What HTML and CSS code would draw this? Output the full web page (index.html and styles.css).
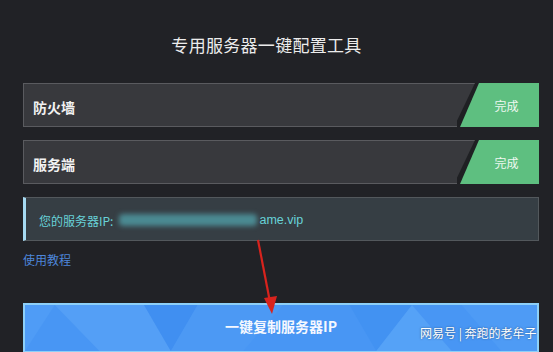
FILE: index.html
```html
<!DOCTYPE html>
<html lang="zh">
<head>
<meta charset="utf-8">
<link rel="stylesheet" href="styles.css">
</head>
<body>
<div class="page">
  <h1 class="title">专用服务器一键配置工具</h1>
  <div class="list">
    <div class="row">
      <span class="label">防火墙</span>
      <span class="status"><span class="status-fill">完成</span></span>
    </div>
    <div class="row">
      <span class="label">服务端</span>
      <span class="status"><span class="status-fill">完成</span></span>
    </div>
    <div class="ip">
      <span class="ip-text">您的服务器IP:</span><span class="blur"></span><span class="ip-text latin">ame.vip</span>
    </div>
  </div>
  <a class="link" href="#">使用教程</a>
  <div class="btn">
    <svg class="btn-bg" viewBox="0 0 516 50" preserveAspectRatio="none">
      <polygon points="0,0 30,0 0,50" fill="#4f9cf6"/>
      <polygon points="30,0 120,0 147,50 75,50" fill="#549ff6"/>
      <polygon points="120,0 174,0 147,50" fill="#408ff1"/>
      <polygon points="174,0 260,0 220,50 147,50" fill="#4c99f4"/>
      <polygon points="327,0 390,0 354,50" fill="#4292f2"/>
      <polygon points="354,50 390,0 430,50" fill="#55a2f7"/>
      <polygon points="440,0 516,0 516,50 480,50" fill="#4e9bf5"/>
    </svg>
    <span class="btn-text">一键复制服务器IP</span>
  </div>
</div>
<svg class="arrow" width="553" height="352" viewBox="0 0 553 352">
  <line x1="258" y1="240" x2="270" y2="302" stroke="#d8231d" stroke-width="2.2"/>
  <polygon points="264,298 277,296 272,314" fill="#d8231d"/>
</svg>
<div class="watermark">网易号 | 奔跑的老牟子</div>
</body>
</html>
```
FILE: styles.css
```css
html, body {
  margin: 0;
  padding: 0;
}
body {
  width: 553px;
  height: 352px;
  overflow: hidden;
  background: #212226;
  font-family: "Noto Sans CJK SC", "Noto Sans", sans-serif;
  position: relative;
}
.page {
  padding: 33px 14px 0 23px;
  display: flex;
  flex-direction: column;
}
.title {
  margin: 0 0 26px;
  padding-right: 29px;
  height: 24px;
  line-height: 24px;
  font-size: 17px;
  font-weight: normal;
  color: #ececec;
  text-align: center;
  letter-spacing: 0.3px;
}
.list {
  display: flex;
  flex-direction: column;
  gap: 13px;
}
.row {
  box-sizing: border-box;
  height: 44px;
  border: 1px solid #5a5b5f;
  background: #38393d;
  display: flex;
  align-items: center;
}
.label {
  flex: 1;
  padding-left: 9px;
  font-size: 14px;
  font-weight: bold;
  color: #f2f2f2;
  line-height: 16px;
  padding-top: 3px;
}
.status {
  align-self: stretch;
  margin: -1px -1px -1px 0;
  width: 82px;
  background: #1f2023;
  clip-path: polygon(18px 0, 100% 0, 100% 100%, -3px 100%);
  display: flex;
}
.status-fill {
  flex: 1;
  margin-left: 3px;
  background: #5ebf80;
  clip-path: polygon(19px 0, 100% 0, 100% 100%, 0 100%);
  color: #eef8f0;
  font-size: 12px;
  display: flex;
  align-items: center;
  justify-content: center;
  padding-left: 14px;
  padding-top: 1px;
}
.ip {
  box-sizing: border-box;
  height: 44px;
  border: 1px solid #53585c;
  border-left: 3px solid #a6daf2;
  background: #363e44;
  display: flex;
  align-items: center;
  padding-left: 13px;
  padding-top: 2px;
}
.ip-text {
  font-size: 12px;
  color: #68d2d8;
}
.latin {
  font-family: "Liberation Sans", sans-serif;
  font-size: 12.5px;
}
.blur {
  display: inline-block;
  width: 138px;
  height: 12px;
  margin: 0 2px 0 6px;
  background: #4b8a92;
  filter: blur(2.5px);
  border-radius: 4px;
}
.link {
  margin-top: 12px;
  height: 14px;
  line-height: 14px;
  font-size: 12px;
  color: #4d86da;
  text-decoration: none;
  align-self: flex-start;
}
.btn {
  margin-top: 36px;
  box-sizing: border-box;
  height: 50px;
  border: 2px solid #8dd0f8;
  background: #4896f4;
  position: relative;
  display: flex;
  align-items: center;
  justify-content: center;
  padding-bottom: 4px;
}
.btn-bg {
  position: absolute;
  left: 0;
  top: 0;
  width: 100%;
  height: 100%;
}
.btn-text {
  position: relative;
  color: #f5f8ff;
  font-size: 14px;
  font-weight: bold;
}
.arrow {
  position: absolute;
  left: 0;
  top: 0;
}
.watermark {
  position: absolute;
  left: 420px;
  top: 325px;
  font-size: 12px;
  line-height: 16px;
  color: #ffffff;
  white-space: nowrap;
  text-shadow: 0 0 2px rgba(0,0,0,0.5);
}
```
